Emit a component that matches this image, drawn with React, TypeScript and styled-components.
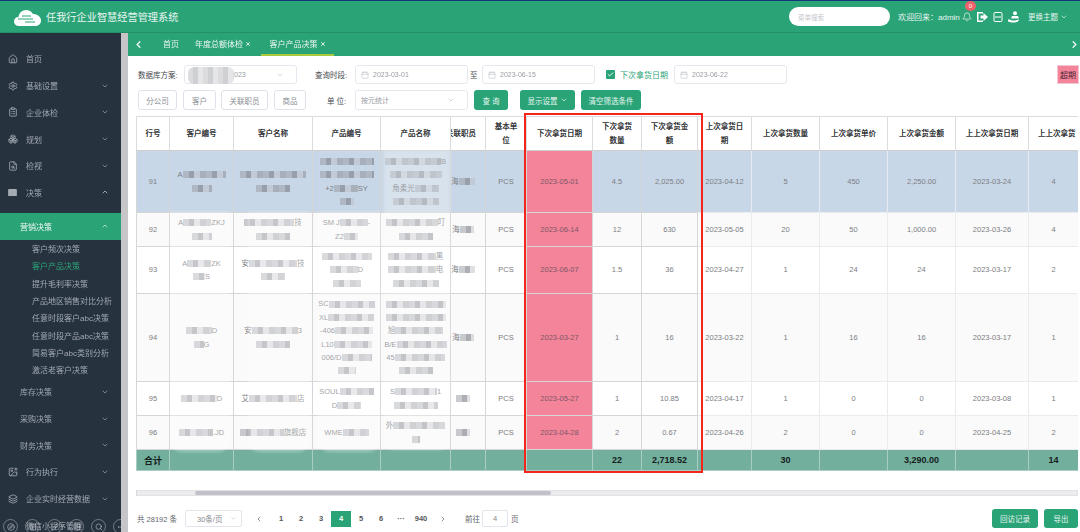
import React from "react";
import styled, { createGlobalStyle } from "styled-components";
import {
  Home, Settings, Boxes, ChevronDown, ChevronUp, ChevronLeft, ChevronRight, Bell, Search, MoreHorizontal,
  Layers, Compass, Pencil, X, ClipboardList, FileSearch, ImagePlus, Calendar, Check, Grid2x2,
} from "lucide-react";

const Global = createGlobalStyle`
  html, body { margin: 0; padding: 0; width: 1080px; height: 532px; overflow: hidden; background: #fff; }
  * { box-sizing: border-box; }
  body { font-family: "Liberation Sans", "Noto Sans CJK SC", sans-serif; }
`;

const GREEN = "#2aa377";
const PINK = "#f4849a";

const Page = styled.div`
  width: 1080px; height: 532px; display: flex; flex-direction: column; overflow: hidden; position: relative;
  filter: blur(0.3px);
`;
const Header = styled.header`
  height: 33px; flex: none; background: ${GREEN}; border-top: 1px solid #14357a; border-bottom: 1px solid #239168;
  display: flex; align-items: center; color: #fff;
`;
const Logo = styled.svg` width: 29px; height: 20px; margin-left: 13px; flex: none; `;
const Title = styled.div` margin-left: 4px; font-size: 10.2px; color: #e9f6f1; white-space: nowrap; `;
const SearchPill = styled.div`
  margin-left: auto; width: 101px; height: 19px; border-radius: 10px; background: #fff; color: #c4c6cc;
  font-size: 6.5px; display: flex; align-items: center; padding-left: 9px;
`;
const Welcome = styled.div` margin-left: 8px; width: 64px; font-size: 8px; white-space: nowrap; color: #e9f6f1; `;
const IconSlot = styled.div<{ $w: number }>`
  width: ${(p) => p.$w}px; display: flex; justify-content: center; position: relative; flex: none;
`;
const Badge = styled.span`
  position: absolute; left: 3px; top: -11px; width: 11px; height: 10px; border-radius: 50%; background: #f0626b; color: #fff;
  font-size: 6px; display: flex; align-items: center; justify-content: center;
`;
const Theme = styled.div`
  margin-left: 4px; margin-right: 12px; font-size: 7.5px; white-space: nowrap; display: flex; align-items: center; gap: 2px; color: #e9f6f1;
`;

const Body = styled.div` flex: 1; display: flex; min-height: 0; `;
const Sidebar = styled.nav`
  width: 121px; flex: none; background: #27323f; padding-top: 12.6px; position: relative; overflow: hidden;
  color: #a0a8b1; font-size: 8px;
`;
const Track = styled.div` width: 7px; flex: none; background: #c6c6c8; `;
const Item = styled.div<{ $pad?: number; $active?: boolean }>`
  height: 26.7px; display: flex; align-items: center; padding-left: ${(p) => p.$pad ?? 8}px; padding-right: 12px;
  background: ${(p) => (p.$active ? GREEN : "transparent")}; color: ${(p) => (p.$active ? "#eef8f4" : "#a0a8b1")};
  white-space: nowrap;
`;
const ItemIcon = styled.span` width: 18px; flex: none; display: flex; color: #a4abb3; `;
const Caret = styled.span<{ $light?: boolean }>` margin-left: auto; display: flex; color: ${(p) => (p.$light ? "#e0e4e8" : "inherit")}; `;
const Gap = styled.div` height: 7.4px; `;
const Sub = styled.div<{ $on?: boolean }>`
  height: 17.35px; display: flex; align-items: center; padding-left: 32px; white-space: nowrap;
  color: ${(p) => (p.$on ? GREEN : "#a0a8b1")};
`;
const Floaters = styled.div`
  position: absolute; left: 3px; bottom: -3px; width: 125px; height: 16px; display: flex; justify-content: space-between;
`;
const Floater = styled.span`
  width: 15px; height: 15px; border-radius: 50%; border: 1px solid rgba(190,195,200,.5); display: flex; align-items: center; justify-content: center;
  color: rgba(205,210,215,.8);
`;

const Main = styled.main` flex: 1; min-width: 0; display: flex; flex-direction: column; `;
const TabBar = styled.div`
  height: 23px; flex: none; background: ${GREEN}; display: flex; align-items: center; color: #eaf7f2; font-size: 8px; padding-left: 5px; position: relative;
`;
const Tab = styled.div<{ $w: number; $ml: number; $on?: boolean }>`
  height: 23px; display: flex; align-items: center; justify-content: center; gap: 2px; white-space: nowrap;
  width: ${(p) => p.$w}px; margin-left: ${(p) => p.$ml}px;
  border-bottom: 2px solid ${(p) => (p.$on ? "#a9c93f" : "transparent")};
`;
const TabEnd = styled.span` margin-left: auto; display: flex; `;

const Content = styled.div` flex: 1; min-height: 0; padding: 9px 0 0 8px; display: flex; flex-direction: column; background: #fff; `;
const Row = styled.div<{ $h: number }>`
  display: flex; align-items: center; height: ${(p) => p.$h}px; margin-bottom: 6px;
  padding-left: 2px; font-size: 7.5px; color: #55585e; flex: none;
`;
const Label = styled.span<{ $w: number; $ml?: number }>`
  width: ${(p) => p.$w}px; margin-left: ${(p) => p.$ml ?? 0}px; flex: none; white-space: nowrap; color: #45484e;
`;
const Field = styled.div<{ $ml?: number }>`
  width: 113px; height: 100%; flex: none; border: 1px solid #e6e8f0; border-radius: 3px; display: flex; align-items: center;
  padding-left: 5px; gap: 4px; color: #989ba2; font-size: 7px; margin-left: ${(p) => p.$ml ?? 0}px; position: relative; background: #fff;
`;
const CalIcon = styled(Calendar)` color: #c4c7ce; flex: none; `;
const FieldCaret = styled.span` margin-left: auto; margin-right: 12px; display: flex; color: #c0c4cc; `;
const Veil = styled.span`
  position: absolute; left: 3px; top: 1px; width: 46px; height: 17px; border-radius: 6px;
  background: repeating-linear-gradient(90deg, #dcdcde 0 5px, #cfd0d3 5px 10px, #e6e6e8 10px 15px);
`;
const VeilTail = styled.span` margin-left: 44px; `;
const Tick = styled.span`
  width: 9px; height: 9px; background: ${GREEN}; border-radius: 1px; margin-left: 11px; flex: none; display: flex; align-items: center; justify-content: center; color: #fff;
`;
const CheckText = styled.span` margin-left: 5px; width: 49px; color: ${GREEN}; font-size: 8px; white-space: nowrap; `;
const Overdue = styled.div`
  margin-left: auto; width: 22px; margin-right: 1px; height: 100%; background: ${PINK}; color: #4a2530; font-size: 8px;
  display: flex; align-items: center; justify-content: center; white-space: nowrap; border: 1px solid #f3c8d2;
`;
const GhostBtn = styled.button<{ $w: number; $ml?: number }>`
  width: ${(p) => p.$w}px; margin-left: ${(p) => p.$ml ?? 0}px; height: 100%; flex: none; border: 1px solid #dfe2ea; border-radius: 3px;
  background: #fff; color: #8a8d94; font: 7.5px "Liberation Sans", "Noto Sans CJK SC", sans-serif; padding: 0;
`;
const SolidBtn = styled.button<{ $w: number; $ml?: number }>`
  width: ${(p) => p.$w}px; margin-left: ${(p) => p.$ml ?? 0}px; height: 100%; flex: none; border: 0; border-radius: 3px;
  background: ${GREEN}; color: #e9f7f2; font: 7.5px "Liberation Sans", "Noto Sans CJK SC", sans-serif; padding: 0;
  display: flex; align-items: center; justify-content: center; gap: 2px; white-space: nowrap;
`;

const TableWrap = styled.div` width: 942px; height: 380px; flex: none; position: relative; display: flex; flex-direction: column; `;
const TableClip = styled.div` flex: 1; overflow: hidden; min-height: 0; `;
const Table = styled.table`
  width: 942px; table-layout: fixed; border-collapse: collapse; font-size: 7.5px; color: #7b7d82;
`;
const Th = styled.th`
  border: 1px solid #dcdcdc; border-bottom-color: #cfcfcf; height: 34px; padding: 0 6px; font-weight: normal; color: #2f3236; text-shadow: 0 0 .4px #333;
  line-height: 13.4px; text-align: center; background: #fff; overflow: hidden;
`;
const ThEnd = styled(Th)` padding: 0; `;
const ThClip = styled.div<{ $start?: boolean }>`
  display: flex; justify-content: ${(p) => (p.$start ? "flex-start" : "flex-end")}; white-space: nowrap; overflow: hidden;
  padding: ${(p) => (p.$start ? "0 0 0 9px" : "0 9px 0 0")};
`;
const Tr = styled.tr<{ $h: number; $bg: string }>`
  height: ${(p) => p.$h}px; background: ${(p) => p.$bg};
`;
const Td = styled.td<{ $pink?: boolean; $soft?: boolean; $pr?: number }>`
  border: 1px solid ${(p) => (p.$soft ? "#e9ebee" : "#d6d6d6")}; padding: 0 ${(p) => p.$pr ?? 2}px 0 2px; text-align: center; line-height: 13.4px; overflow: hidden;
  background: ${(p) => (p.$pink ? PINK : "transparent")}; color: ${(p) => (p.$pink ? "#7d5766" : "#7b7d82")};
`;
const TotalRow = styled.tr` height: 21px; background: #72b09d; `;
const TotalTd = styled.td`
  border: 1px solid #a9cdc0; text-align: center; font-size: 9px; font-weight: bold; color: #15201c; padding: 0;
`;
const Line = styled.div` display: flex; align-items: center; justify-content: center; height: 13.4px; white-space: nowrap; `;
const Mosaic = styled.span<{ $w: number }>`
  display: inline-block; height: 7px; flex: none; width: ${(p) => p.$w}px;
  background: repeating-linear-gradient(90deg, rgba(150,152,160,.5) 0 6px, rgba(120,122,132,.6) 6px 11px, rgba(185,186,192,.45) 11px 17px, rgba(140,142,150,.55) 17px 23px);
`;
const Smudge = styled.div<{ $l: number; $t: number; $w: number; $h: number; $a: number }>`
  position: absolute; left: ${(p) => p.$l}px; top: ${(p) => p.$t}px; width: ${(p) => p.$w}px; height: ${(p) => p.$h}px;
  background: rgba(255,255,255,${(p) => p.$a}); filter: blur(1.5px); pointer-events: none; border-radius: 0 0 12px 12px;
`;
const RedBox = styled.div`
  position: absolute; left: 388px; top: -3px; width: 179px; height: 360px; border: 2px solid #f5251c; pointer-events: none;
`;
const HScroll = styled.div` height: 6px; flex: none; background: #ececee; border: 1px solid #e2e2e4; border-left-color: #d8d8d8; `;
const Thumb = styled.div` margin-left: 58px; width: 356px; height: 100%; background: #c0c1c9; border-radius: 2px; `;

const Pager = styled.div`
  display: flex; align-items: center; height: 17px; margin-top: 14px; font-size: 7.5px; color: #62656b; flex: none;
`;
const Total = styled.span` width: 49px; padding-left: 1px; white-space: nowrap; flex: none; `;
const PageSize = styled.div`
  width: 57px; height: 100%; flex: none; border: 1px solid #e2e4ea; border-radius: 2px; display: flex; align-items: center; padding-left: 11px; gap: 8px; color: #85888e; white-space: nowrap;
`;
const PageNo = styled.div<{ $on?: boolean; $ml?: number; $plain?: boolean }>`
  width: 20px; height: 16px; flex: none; display: flex; align-items: center; justify-content: center; margin-left: ${(p) => p.$ml ?? 0}px;
  font-weight: ${(p) => (p.$plain ? "normal" : "bold")};
  background: ${(p) => (p.$on ? GREEN : "transparent")}; color: ${(p) => (p.$on ? "#fff" : "#54575d")};
`;
const GoInput = styled.div`
  width: 26px; height: 100%; flex: none; border: 1px solid #e2e4ea; border-radius: 2px; display: flex; align-items: center; justify-content: center; margin: 0 3px 0 2px; color: #85888e;
`;
const PagerText = styled.span<{ $ml?: number }>` white-space: nowrap; flex: none; margin-left: ${(p) => p.$ml ?? 0}px; `;
const PagerActions = styled.div` margin-left: auto; display: flex; height: 19px; margin-right: 2px; `;

type Seg = [string, number?, string?];
const C = ({ lines }: { lines: Seg[] }) => (
  <>
    {lines.map((l, i) => (
      <Line key={i}>{l[0]}{l[1] ? <Mosaic $w={l[1]} /> : null}{l[2]}</Line>
    ))}
  </>
);

const widths = [33, 64, 79, 68, 70, 35, 41, 66, 49, 56, 54, 68, 68, 68, 73, 50];
const heads = ["行号", "客户编号", "客户名称", "产品编号", "产品名称", "", "基本单位", "下次拿货日期", "下次拿货数量", "下次拿货金额", "上次拿货日期", "上次拿货数量", "上次拿货单价", "上次拿货金额", "上上次拿货日期", ""];

const rows: { h: number; bg: string; no: string; a: Seg[]; b: Seg[]; c: Seg[]; d: Seg[]; e: Seg[]; v: string[] }[] = [
  { h: 62, bg: "#c8d7e7", no: "91", a: [["A", 43], ["", 20]], b: [["", 66], ["", 34]], c: [["", 54], ["", 54], ["+2", 24, "SY"], ["", 14]], d: [["", 56, "B"], ["", 52], ["角柔光", 24], ["", 46]], e: [["海", 16]], v: ["2023-05-01", "4.5", "2,025.00", "2023-04-12", "5", "450", "2,250.00", "2023-03-24", "4"] },
  { h: 34, bg: "#fafafa", no: "92", a: [["A", 28, "ZKJ"], ["", 20, ""]], b: [["", 50, "技"], ["", 34]], c: [["SM J", 28, "-"], ["Z2", 14]], d: [["", 52, "叮"], ["", 34]], e: [["海", 14]], v: ["2023-06-14", "12", "630", "2023-05-05", "20", "50", "1,000.00", "2023-03-26", "4"] },
  { h: 47, bg: "#fff", no: "93", a: [["A", 24, "ZK"], ["", 12, "S"]], b: [["安", 48, "技"], ["", 24]], c: [["", 50], ["", 28, "D"], ["", 28]], d: [["", 48, "黑"], ["", 48, "电"], ["", 46]], e: [["海", 16]], v: ["2023-06-07", "1.5", "36", "2023-04-27", "1", "24", "24", "2023-03-17", "2"] },
  { h: 88, bg: "#fafafa", no: "94", a: [["", 26, "D"], ["", 10, "G"]], b: [["安", 46, "3"], ["", 34]], c: [["SC", 46], ["XL", 46], ["-406", 38], ["L10", 38], ["006/D", 30], ["", 18]], d: [["", 60], ["", 60], ["旭", 48], ["B/E", 50], ["45", 50], ["", 34]], e: [["海", 14]], v: ["2023-03-27", "1", "16", "2023-03-22", "1", "16", "16", "2023-03-17", "1"] },
  { h: 34, bg: "#fff", no: "95", a: [["", 36, "D"]], b: [["艾", 48, "店"]], c: [["SOUL", 34], ["D", 24]], d: [["S", 42, "1"], ["", 44]], e: [["", 14]], v: ["2023-05-27", "1", "10.85", "2023-04-17", "1", "0", "0", "2023-03-08", "1"] },
  { h: 34, bg: "#fafafa", no: "96", a: [["", 34, ".JD"]], b: [["", 44, "旗舰店"]], c: [["WME", 26]], d: [["外", 52], ["", 8]], e: [["", 14]], v: ["2023-04-28", "2", "0.67", "2023-04-26", "2", "0", "0", "2023-04-25", "2"] },
];

const subs = ["客户频次决策", "客户产品决策", "提升毛利率决策", "产品地区销售对比分析", "任意时段客户abc决策", "任意时段产品abc决策", "简易客户abc类别分析", "激活老客户决策"];
const smudges = [
  { l: 34, t: 96, w: 60, h: 240, a: 0.3 },
  { l: 112, t: 96, w: 62, h: 240, a: 0.3 },
  { l: 182, t: 96, w: 62, h: 240, a: 0.3 },
  { l: 248, t: 34, w: 66, h: 300, a: 0.28 },
];

export default function App() {
  return (
    <Page>
      <Global />
      <Header>
        <Logo viewBox="0 0 29 20">
          <path d="M6 19c-3 0-5-2-5-4.500S3 10 5.500 10C6 6 9 3 13 3c3 0 5.500 1.500 7 4 4 0 8 2.500 8 6.500S25 19 22 19z" fill="#fff" />
          <path d="M9 9h9M5 12h15M12 15h10" stroke={GREEN} strokeWidth="1" fill="none" />
        </Logo>
        <Title>任我行企业智慧经营管理系统</Title>
        <SearchPill>菜单搜索</SearchPill>
        <Welcome>欢迎回来：admin</Welcome>
        <IconSlot $w={10}>
          <Bell size={10} strokeWidth={1.6} />
          <Badge>0</Badge>
        </IconSlot>
        <IconSlot $w={21}>
          <svg width="11" height="10" viewBox="0 0 11 10">
            <path d="M0 0h6v1.500H1.500v7H6V10H0z" fill="#fff" />
            <path d="M3.500 3.500h3V1l4.500 4-4.500 4V6.500h-3z" fill="#fff" />
          </svg>
        </IconSlot>
        <IconSlot $w={10}>
          <svg width="10" height="10" viewBox="0 0 10 10" fill="none" stroke="#fff" strokeWidth="1">
            <path d="M1 4V1.500a1 1 0 0 1 1-1h6a1 1 0 0 1 1 1V4M0 5h10M1 6v2.500a1 1 0 0 0 1 1h6a1 1 0 0 0 1-1V6" />
          </svg>
        </IconSlot>
        <IconSlot $w={21}>
          <svg width="12" height="12" viewBox="0 0 12 12">
            <circle cx="7" cy="2.200" r="2" fill="#fff" />
            <path d="M4 5h6l1 2.500H3z" fill="#fff" />
            <path d="M0 8.500c2 0 3 .5 4 1h3l4-1c0 1.500-2 3-4 3H3.500L0 10.500z" fill="#fff" />
          </svg>
        </IconSlot>
        <Theme>更换主题<ChevronDown size={8} /></Theme>
      </Header>
      <Body>
        <Sidebar>
          <Item><ItemIcon><Home size={10} /></ItemIcon>首页</Item>
          <Item><ItemIcon><Settings size={10} /></ItemIcon>基础设置<Caret><ChevronDown size={8} /></Caret></Item>
          <Item><ItemIcon><ClipboardList size={10} /></ItemIcon>企业体检<Caret><ChevronDown size={8} /></Caret></Item>
          <Item><ItemIcon><Boxes size={10} /></ItemIcon>规划<Caret><ChevronDown size={8} /></Caret></Item>
          <Item><ItemIcon><FileSearch size={10} /></ItemIcon>检视<Caret><ChevronDown size={8} /></Caret></Item>
          <Item>
            <ItemIcon><svg width="9" height="7" viewBox="0 0 10 8"><rect width="10" height="8" rx="1" fill="#a4abb3" /></svg></ItemIcon>
            决策<Caret $light><ChevronUp size={8} /></Caret>
          </Item>
          <Gap />
          <Item $pad={20} $active>营销决策<Caret><ChevronUp size={8} /></Caret></Item>
          {subs.map((s, i) => <Sub key={s} $on={i === 1}>{s}</Sub>)}
          <Item $pad={20}>库存决策<Caret><ChevronDown size={8} /></Caret></Item>
          <Item $pad={20}>采购决策<Caret><ChevronDown size={8} /></Caret></Item>
          <Item $pad={20}>财务决策<Caret><ChevronDown size={8} /></Caret></Item>
          <Item><ItemIcon><ImagePlus size={10} /></ItemIcon>行为执行<Caret><ChevronDown size={8} /></Caret></Item>
          <Item><ItemIcon><Layers size={10} /></ItemIcon>企业实时经营数据<Caret><ChevronDown size={8} /></Caret></Item>
          <Item $pad={26}>微信小程序管理</Item>
          <Floaters>
            <Floater><Compass size={8} /></Floater>
            <Floater><Grid2x2 size={8} /></Floater>
            <Floater><Pencil size={8} /></Floater>
            <Floater><Grid2x2 size={8} /></Floater>
            <Floater><Search size={8} /></Floater>
            <Floater><MoreHorizontal size={8} /></Floater>
          </Floaters>
        </Sidebar>
        <Track />
        <Main>
          <TabBar>
            <ChevronLeft size={11} strokeWidth={3} />
            <Tab $w={30} $ml={12}>首页</Tab>
            <Tab $w={66} $ml={4}>年度总额体检<X size={6} strokeWidth={3.5} /></Tab>
            <Tab $w={73} $ml={5} $on>客户产品决策<X size={6} strokeWidth={3.5} /></Tab>
            <TabEnd><ChevronRight size={11} strokeWidth={3} /></TabEnd>
          </TabBar>
          <Content>
            <Row $h={19}>
              <Label $w={46}>数据库方案:</Label>
              <Field><Veil />
                <VeilTail>023</VeilTail>
                <FieldCaret><ChevronDown size={8} /></FieldCaret>
              </Field>
              <Label $w={40} $ml={18}>查询时段:</Label>
              <Field><CalIcon size={8} />2023-03-01</Field>
              <Label $w={14}>&nbsp;至</Label>
              <Field><CalIcon size={8} />2023-06-15</Field>
              <Tick><Check size={7} strokeWidth={3} /></Tick>
              <CheckText>下次拿货日期</CheckText>
              <Field $ml={5}><CalIcon size={8} />2023-06-22</Field>
              <Overdue>超期</Overdue>
            </Row>
            <Row $h={20}>
              <GhostBtn $w={39}>分公司</GhostBtn>
              <GhostBtn $w={33} $ml={6}>客户</GhostBtn>
              <GhostBtn $w={47} $ml={5}>关联职员</GhostBtn>
              <GhostBtn $w={32} $ml={6}>商品</GhostBtn>
              <Label $w={28} $ml={21}>单 位:</Label>
              <Field>按元统计<FieldCaret><ChevronDown size={8} /></FieldCaret></Field>
              <SolidBtn $w={34} $ml={6}>查 询</SolidBtn>
              <SolidBtn $w={55} $ml={12}>显示设置<ChevronDown size={8} /></SolidBtn>
              <SolidBtn $w={60} $ml={6}>清空筛选条件</SolidBtn>
            </Row>
            <TableWrap>
              <TableClip>
                <Table>
                  <colgroup>{widths.map((w, i) => <col key={i} width={w} />)}</colgroup>
                  <thead>
                    <tr>
                      {heads.map((h, i) =>
                        i === 5 ? <ThEnd key={i}><ThClip>关联职员</ThClip></ThEnd>
                        : i === 15 ? <ThEnd key={i}><ThClip $start>上上次拿货</ThClip></ThEnd>
                        : <Th key={i}>{h}</Th>
                      )}
                    </tr>
                  </thead>
                  <tbody>
                    {rows.map((r) => (
                      <Tr key={r.no} $h={r.h} $bg={r.bg}>
                        <Td>{r.no}</Td>
                        <Td><C lines={r.a} /></Td>
                        <Td><C lines={r.b} /></Td>
                        <Td><C lines={r.c} /></Td>
                        <Td><C lines={r.d} /></Td>
                        <Td $pr={12}><C lines={r.e} /></Td>
                        <Td>PCS</Td>
                        <Td $pink>{r.v[0]}</Td>
                        <Td>{r.v[1]}</Td>
                        <Td>{r.v[2]}</Td>
                        {r.v.slice(3).map((v, i) => <Td key={i} $soft>{v}</Td>)}
                      </Tr>
                    ))}
                    <TotalRow>
                      <TotalTd>合计</TotalTd>
                      {["", "", "", "", "", "", "", "22", "2,718.52", "", "30", "", "3,290.00", "", "14"].map((v, i) => (
                        <TotalTd key={i}>{v}</TotalTd>
                      ))}
                    </TotalRow>
                  </tbody>
                </Table>
              </TableClip>
              <HScroll><Thumb /></HScroll>
              {smudges.map((s, i) => <Smudge key={i} $l={s.l} $t={s.t} $w={s.w} $h={s.h} $a={s.a} />)}
              <RedBox />
            </TableWrap>
            <Pager>
              <Total>共 28192 条</Total>
              <PageSize>30条/页<ChevronDown size={7} color="#c0c4cc" /></PageSize>
              <PageNo $ml={7} $plain><ChevronLeft size={8} /></PageNo>
              <PageNo $ml={2}>1</PageNo>
              <PageNo>2</PageNo>
              <PageNo>3</PageNo>
              <PageNo $on>4</PageNo>
              <PageNo>5</PageNo>
              <PageNo>6</PageNo>
              <PageNo>···</PageNo>
              <PageNo>940</PageNo>
              <PageNo $ml={2} $plain><ChevronRight size={8} /></PageNo>
              <PagerText $ml={12}>前往</PagerText>
              <GoInput>4</GoInput>
              <PagerText>页</PagerText>
              <PagerActions>
                <SolidBtn $w={46}>回访记录</SolidBtn>
                <SolidBtn $w={34} $ml={6}>导出</SolidBtn>
              </PagerActions>
            </Pager>
          </Content>
        </Main>
      </Body>
    </Page>
  );
}
